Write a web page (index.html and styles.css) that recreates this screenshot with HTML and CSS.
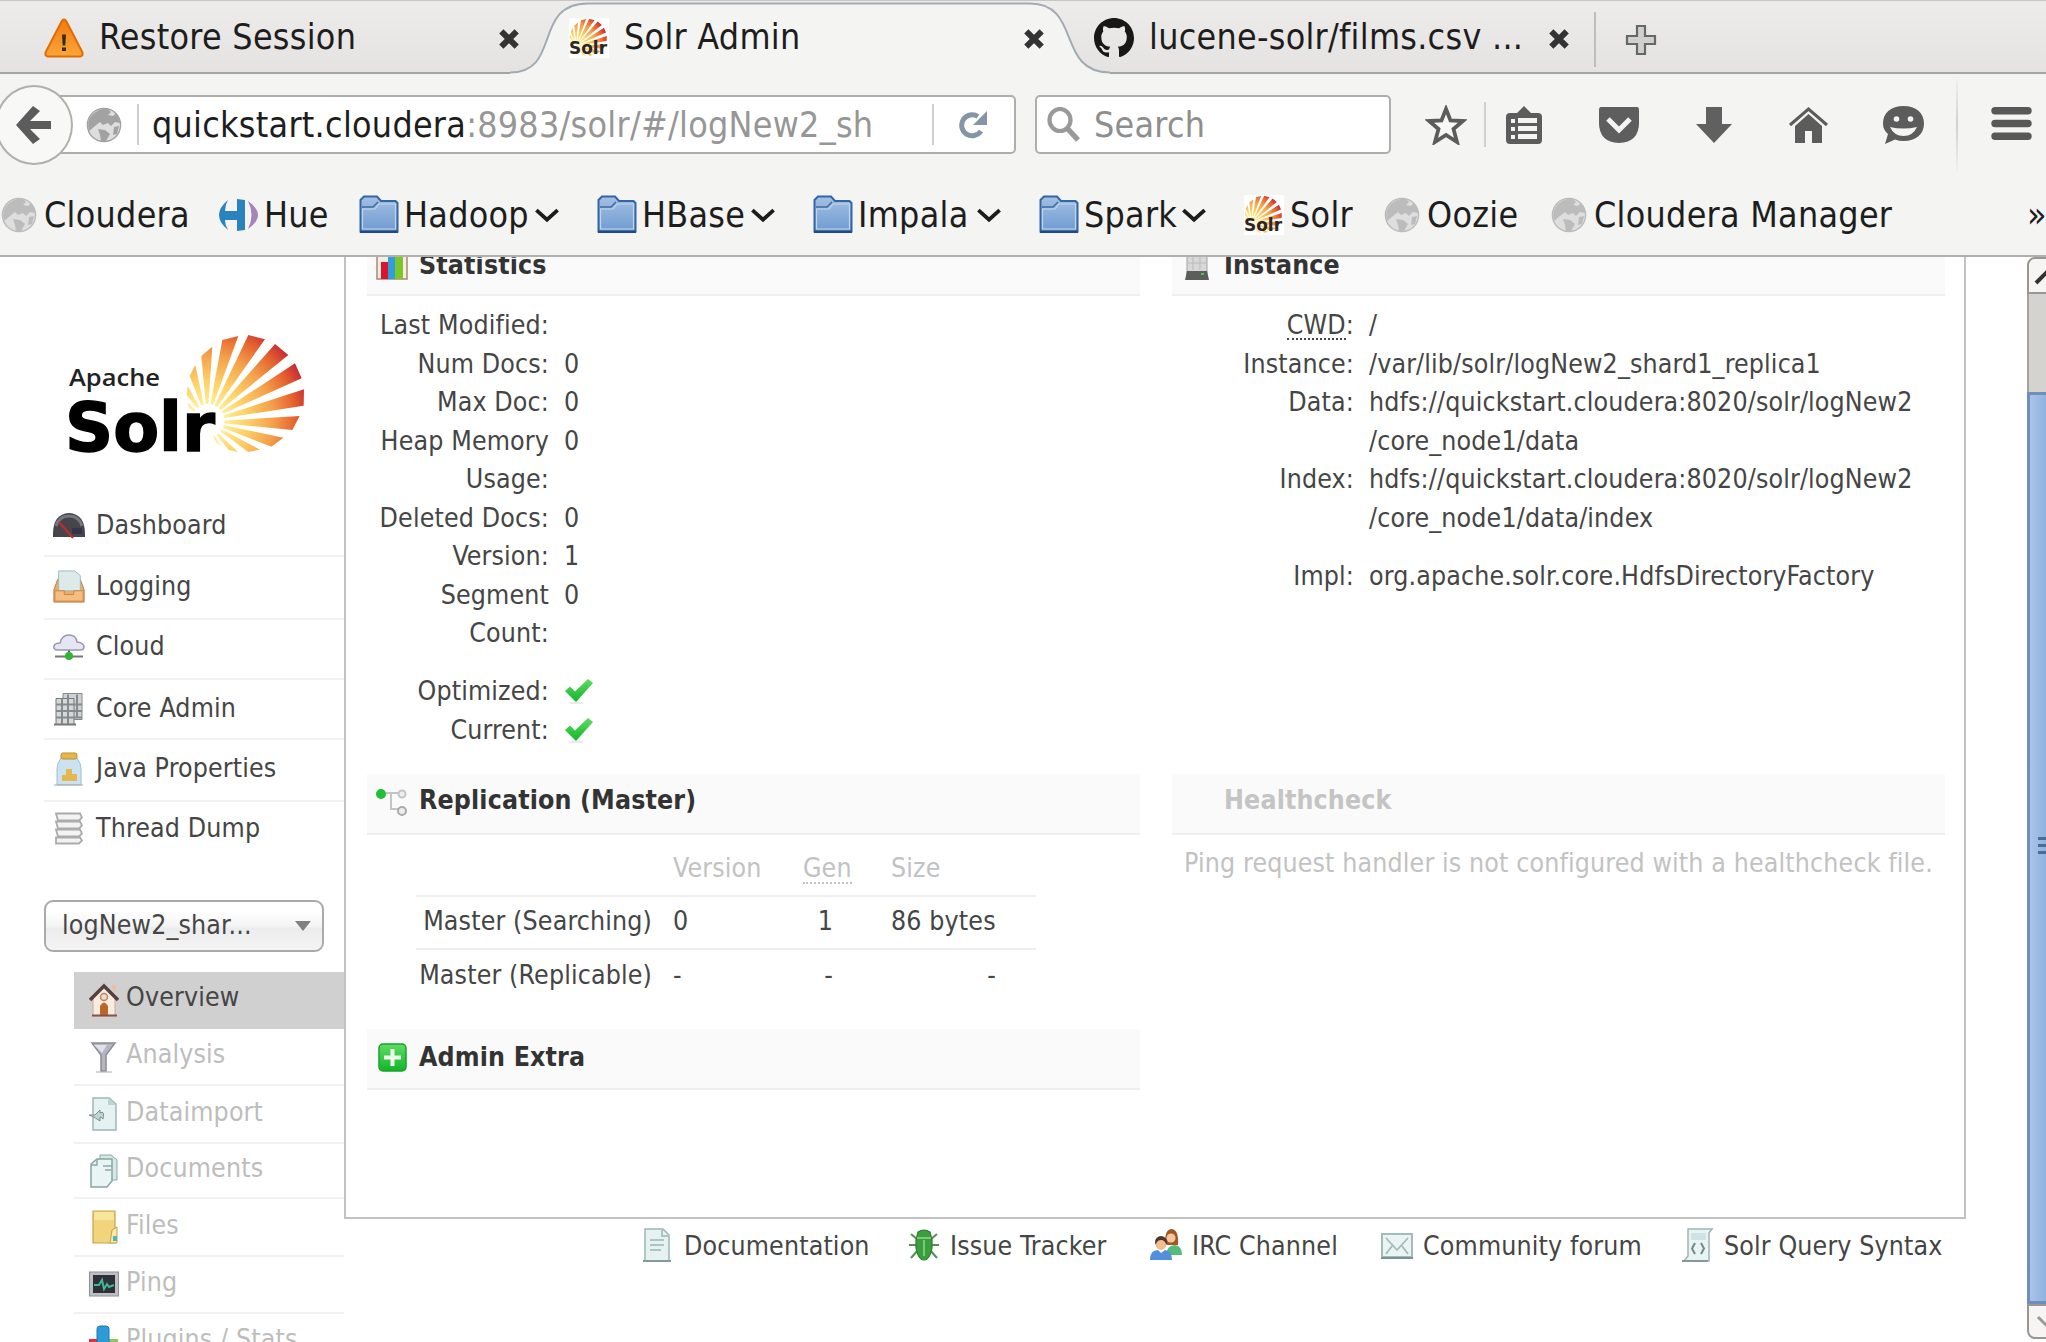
FILE: index.html
```html
<!DOCTYPE html>
<html lang="en">
<head>
<meta charset="utf-8">
<title>Solr Admin</title>
<link rel="stylesheet" href="styles.css">
</head>
<body>
<svg class="defs" width="0" height="0" aria-hidden="true">
  <defs>
    <radialGradient id="sun" gradientUnits="userSpaceOnUse" cx="622" cy="512" r="330">
      <stop offset=".12" stop-color="#fff3a0"/><stop offset=".35" stop-color="#fdd268"/><stop offset=".6" stop-color="#f4a04a"/><stop offset=".8" stop-color="#e5622f"/><stop offset=".95" stop-color="#c62a33"/>
    </radialGradient>
    <linearGradient id="folderFill" x1="0" y1="0" x2="0" y2="1"><stop offset="0" stop-color="#a4c0e4"/><stop offset="1" stop-color="#6f9bd0"/></linearGradient>
    <linearGradient id="warnFill" x1="0" y1="0" x2="0" y2="1"><stop offset="0" stop-color="#f07a10"/><stop offset="1" stop-color="#fba63a"/></linearGradient>
    <linearGradient id="greenFill" x1="0" y1="0" x2="0" y2="1"><stop offset="0" stop-color="#5fdc62"/><stop offset="1" stop-color="#12b52a"/></linearGradient>
    <g id="rays" fill="url(#sun)">
      <path d="M622 512L745 255L795 268ZM622 512L825 282L865 315ZM622 512L885 340L905 385ZM622 512L912 418L911 467ZM622 515L899 498L877 540ZM622 515L850 563L814 590ZM622 515L780 599L745 606ZM622 520L714 606L686 600ZM622 512L715 258L667 270ZM622 512L637 290L604 318ZM622 512L586 345L569 378ZM622 512L563 408L560 436ZM622 512L562 458L568 474ZM622 520L664 592L645 570Z"/>
    </g>
  </defs>
  <symbol id="i-solr" viewBox="0 0 40 40">
    <rect width="40" height="40" fill="#fff"/>
    <g transform="translate(-58 -26) scale(.105 .105)"><use href="#rays"/></g>
    <text x="0" y="36" textLength="38" lengthAdjust="spacingAndGlyphs" font-family="DejaVu Sans" font-weight="bold" font-size="17" fill="#2b2626">Solr</text>
  </symbol>
  <symbol id="i-globe" viewBox="0 0 36 36">
    <circle cx="18" cy="18" r="16.6" fill="#dedede" stroke="currentColor" stroke-width="1.4"/>
    <path fill="currentColor" d="M7 7Q14 1 22 2L25 5L22 8L27 9L30 6Q34 11 34 16L29 15L25 19L22 16L17 18L14 15L9 19L3 24Q0 14 7 7ZM12 22L19 23L24 27L20 34L15 34L14 28ZM28 20L33 19L31 27L27 28Z"/>
  </symbol>
  <symbol id="i-folder" viewBox="0 0 40 38">
    <path d="M1.5 12V5L5 1.5H18L22 6H36.500L38.500 8V36.500H1.500Z" fill="url(#folderFill)" stroke="#3465a4" stroke-width="2"/>
    <path d="M3 12H14L19 7" fill="none" stroke="#44699e" stroke-width="1.500"/>
    <path d="M3.500 14H16L20 9H36.500V34H3.500Z" fill="none" stroke="#c3d5ec" stroke-width="1.200"/>
    <path d="M1 36.800H39" stroke="#204a87" stroke-width="2.200"/>
  </symbol>
  <symbol id="i-close" viewBox="0 0 20 20"><path d="M3 3L17 17M17 3L3 17" stroke="#333" stroke-width="5.400"/></symbol>
  <symbol id="i-chev" viewBox="0 0 24 16"><path d="M2 3L12 12L22 3" fill="none" stroke="#1c1c1c" stroke-width="3.600"/></symbol>
  <symbol id="i-check" viewBox="0 0 30 26"><path d="M1 13L6 8.500L11 13.500L24 1L29 5L12 24Z" fill="url(#greenFill)"/><path d="M6 25H19" stroke="#e4e4e4" stroke-width="1.500"/></symbol>
</svg>

<header class="chrome">
  <div class="tabs">
    <div class="tab tab-first">
      <svg class="fav" viewBox="0 0 40 39"><path d="M17.500 3Q20 -1 22.500 3L38.500 34Q39 38 36 38H4Q1 38 1.500 34Z" fill="url(#warnFill)" stroke="#e06c05" stroke-width="2"/><path d="M18 16H22L21.300 27H18.700ZM18 29H22V32.500H18Z" fill="#3b2a14"/></svg>
      <span class="tab-title">Restore Session</span>
      <svg class="close"><use href="#i-close"/></svg>
    </div>
    <div class="tab tab-active">
      <svg class="tab-shape" viewBox="0 0 600 74"><path d="M0 72.500C52 72.500 22 3.500 78 3.500H520C572 3.500 546 72.500 600 72.500V74H0Z" fill="#f4f4f2"/><path d="M0 72.500C52 72.500 22 3.500 78 3.500H520C572 3.500 546 72.500 600 72.500" fill="none" stroke="#a3abb2" stroke-width="2"/></svg>
      <svg class="fav"><use href="#i-solr"/></svg>
      <span class="tab-title">Solr Admin</span>
      <svg class="close"><use href="#i-close"/></svg>
    </div>
    <div class="tab tab-last">
      <svg class="fav" viewBox="0 0 16 16"><path fill="#191717" d="M8 0C3.580 0 0 3.580 0 8c0 3.540 2.290 6.530 5.470 7.590.4.070.55-.17.55-.38 0-.19-.01-.82-.01-1.490-2.010.37-2.530-.49-2.690-.94-.09-.23-.48-.94-.82-1.130-.28-.15-.68-.52-.01-.53.63-.01 1.080.58 1.230.82.72 1.210 1.870.87 2.330.66.07-.52.28-.87.51-1.070-1.780-.2-3.640-.89-3.640-3.950 0-.87.31-1.590.82-2.150-.08-.2-.36-1.020.08-2.120 0 0 .67-.21 2.200.82.64-.18 1.320-.27 2-.27s1.360.09 2 .27c1.530-1.040 2.200-.82 2.200-.82.44 1.100.16 1.920.08 2.120.51.56.82 1.270.82 2.150 0 3.070-1.870 3.750-3.650 3.950.29.25.54.73.54 1.480 0 1.070-.01 1.930-.01 2.200 0 .21.15.46.55.38A8.010 8.010 0 0 0 16 8c0-4.420-3.580-8-8-8Z"/></svg>
      <span class="tab-title">lucene-solr/films.csv ...</span>
      <svg class="close"><use href="#i-close"/></svg>
    </div>
    <div class="new-tab"><svg width="32" height="32" viewBox="0 0 32 32"><path d="M12 2H20V12H30V20H20V30H12V20H2V12H12Z" fill="#d0d0ce" stroke="#666864" stroke-width="2.200"/></svg></div>
  </div>

  <div class="navbar">
    <div class="back"><svg width="36" height="40" viewBox="0 0 36 40"><path d="M0 20L17 1L24 6L14 16H35V24H14L24 34L17 39Z" fill="#5c5c5c"/></svg></div>
    <div class="url">
      <svg class="globe dark"><use href="#i-globe"/></svg>
      <i class="vline"></i>
      <span class="address">quickstart.cloudera<span class="dim">:8983/solr/#/logNew2_sh</span></span>
      <i class="vline"></i>
      <svg class="reload" viewBox="0 0 29 28"><path d="M22 20A10.500 10.500 0 1 1 19 5.500" fill="none" stroke="#8495a6" stroke-width="5"/><path d="M28 0V14H14Z" fill="#8495a6"/></svg>
    </div>
    <div class="search">
      <svg width="34" height="35" viewBox="0 0 34 35"><ellipse cx="13" cy="13" rx="10.500" ry="11" fill="none" stroke="#999" stroke-width="4.200"/><path d="M20 21L31 33" stroke="#999" stroke-width="5.500"/></svg>
      <span>Search</span>
    </div>
    <div class="tools">
      <svg class="t-star" width="42" height="40" viewBox="0 0 42 40"><path d="M21 4L25.500 15.500L38 16L28.500 24L32 37L21 30L10 37L13.500 24L4 16L16.500 15.500Z" fill="#f8f8f7" stroke="#5c5c5c" stroke-width="3.800"/></svg>
      <i class="vline"></i>
      <svg class="t-clip" width="36" height="38" viewBox="0 0 36 38"><path d="M4 7H11L18 0L25 7H32Q36 7 36 11V34Q36 38 32 38H4Q0 38 0 34V11Q0 7 4 7Z" fill="#5c5c5c"/><path d="M5 13H9V17H5ZM5 21H9V25H5ZM5 29H9V33H5ZM12 12H31V17H12ZM12 20H31V25H12ZM12 28H31V33H12Z" fill="#f4f4f2"/></svg>
      <svg class="t-pocket" width="40" height="36" viewBox="0 0 40 36"><path d="M2 0H38Q40 0 40 3V16Q40 35 20 36Q0 35 0 16V3Q0 0 2 0Z" fill="#5e5e5e"/><path d="M9 12L20 23L31 12" fill="none" stroke="#f4f4f2" stroke-width="5"/></svg>
      <svg class="t-down" width="36" height="36" viewBox="0 0 36 36"><path d="M10 0H26V17H36L18 36L0 17H10Z" fill="#606060"/></svg>
      <svg class="t-home" width="39" height="36" viewBox="0 0 39 36"><path d="M1 18L19.500 2L38 18" fill="none" stroke="#5c5c5c" stroke-width="3"/><path d="M6 19L19.500 7L33 19V36H23V24H16V36H6Z" fill="#5c5c5c"/></svg>
      <svg class="t-chat" width="41" height="38" viewBox="0 0 41 38"><path d="M20.500 0C33 0 41 7 41 17.500S33 35 20.500 35Q16 35 12 33.500L2 38L5 28Q0 24 0 17.500C0 7 8 0 20.500 0Z" fill="#5c5c5c"/><circle cx="13.500" cy="13" r="2.800" fill="#f4f4f2"/><circle cx="27.500" cy="13" r="2.800" fill="#f4f4f2"/><path d="M7 21Q20 24 34 21Q30 30 20.500 30Q11 30 7 21Z" fill="#f4f4f2"/></svg>
      <i class="vline tall"></i>
      <svg class="t-menu" width="41" height="33" viewBox="0 0 41 33"><path d="M4 3.800H37M4 16.500H37M4 29.200H37" stroke="#585858" stroke-width="7.400" stroke-linecap="round"/></svg>
    </div>
  </div>

  <div class="bookmarks">
    <svg class="globe b1"><use href="#i-globe"/></svg><span class="w-cloudera">Cloudera</span>
    <svg class="hue" viewBox="0 0 40 32"><path d="M10 1Q-8 16 10 31Q7 26 7 21H19V32L27 31V1L19 0V12H7Q7 6 10 1Z" fill="#2a82bf"/><path d="M30 2Q50 16 30 30Q37 16 30 2Z" fill="#a584b8"/></svg><span class="w-hue">Hue</span>
    <svg class="folder"><use href="#i-folder"/></svg><span class="w-hadoop">Hadoop</span><svg class="chev"><use href="#i-chev"/></svg>
    <svg class="folder"><use href="#i-folder"/></svg><span class="w-hbase">HBase</span><svg class="chev"><use href="#i-chev"/></svg>
    <svg class="folder"><use href="#i-folder"/></svg><span class="w-impala">Impala</span><svg class="chev"><use href="#i-chev"/></svg>
    <svg class="folder"><use href="#i-folder"/></svg><span class="w-spark">Spark</span><svg class="chev"><use href="#i-chev"/></svg>
    <svg class="fav"><use href="#i-solr"/></svg><span class="w-solr">Solr</span>
    <svg class="globe"><use href="#i-globe"/></svg><span class="w-oozie">Oozie</span>
    <svg class="globe"><use href="#i-globe"/></svg><span class="w-cm">Cloudera Manager</span>
    <span class="more">»</span>
  </div>
</header>

<div class="page">
  <aside class="sidebar">
    <svg class="logo" width="320" height="130" viewBox="0 0 320 130">
      <g transform="translate(0 -78) scale(.33333)"><use href="#rays"/><circle cx="624" cy="512" r="50" fill="#fff"/></g>
      <text x="69" y="58" textLength="91" lengthAdjust="spacingAndGlyphs" font-family="Open Sans" font-weight="600" font-size="23" fill="#222">Apache</text>
      <text x="65" y="123" textLength="150" lengthAdjust="spacingAndGlyphs" font-family="DejaVu Sans" font-weight="bold" font-size="67" fill="#000" stroke="#000" stroke-width="1.500">Solr</text>
    </svg>
    <ul class="menu">
      <li><svg viewBox="0 0 32 28"><path d="M0 22Q0 2 16 1Q32 2 32 22V25H0Z" fill="#45454b"/><path d="M3 14Q6 4 16 4T29 14" fill="none" stroke="#77777f" stroke-width="3"/><path d="M19 16H29V22H19Z" fill="#33334a"/><path d="M6 10L20 26" stroke="#c8282c" stroke-width="2"/></svg>Dashboard</li>
      <li><svg viewBox="0 0 32 36"><path d="M4 10H28L32 21V34H0V21Z" fill="#e9ad6b" stroke="#b87b45"/><path d="M5 1H22L28 6V22H5Z" fill="#dcebea" stroke="#9dbab8"/><path d="M1 22H11V26H21V22H31V33H1Z" fill="#f5bd80" stroke="#c98343"/></svg>Logging</li>
      <li><svg viewBox="0 0 32 26"><path d="M16 16V22" stroke="#555" stroke-width="2"/><path d="M2 22.500H30" stroke="#777" stroke-width="2"/><path d="M5 16Q0 16 1 12Q2 9 7 9Q9 1 16 1Q23 1 24 8Q31 9 31 13Q31 16 27 16Z" fill="#e6e6f3" stroke="#9797b5" stroke-width="1.500"/><circle cx="16" cy="22" r="4" fill="#2fb536"/></svg>Cloud</li>
      <li><svg viewBox="0 0 32 33"><path d="M10 1H29V27H10Z" fill="#cfd2d6" stroke="#888"/><path d="M3 6H21V32H3Z" fill="#d5d9d9" stroke="#777"/><path d="M3 12H29M3 18.500H29M3 25H29M9 6V32M15 2V32M24 2V26" stroke="#858b8b" stroke-width="2"/><path d="M1 32H23" stroke="#777" stroke-width="2"/></svg>Core Admin</li>
      <li><svg viewBox="0 0 32 34"><path d="M8 6H24Q28 11 28 17V33H4V17Q4 11 8 6Z" fill="#cbe2f3" stroke="#a0bfd6"/><rect x="8" y="1" width="16" height="6" rx="2" fill="#e6b64c" stroke="#bd8d2c"/><path d="M13 17H19V22H24V29H9V23H13Z" fill="#e5b84f"/><path d="M1 33H30" stroke="#aaa"/></svg>Java Properties</li>
      <li><svg viewBox="0 0 32 33"><path d="M3 1H27L29 5L26 8H5ZM3 9H27L29 13L26 16H5ZM3 17H27L29 21L26 24H5ZM3 25H27L29 28L26 31H3Z" fill="#f3f3f3" stroke="#ababab" stroke-width="1.800"/></svg>Thread Dump</li>
    </ul>
    <div class="select"><span>logNew2_shar...</span><i></i></div>
    <ul class="submenu">
      <li class="active"><svg viewBox="0 0 30 34"><path d="M4 15L15 4L26 15V33H4Z" fill="#f8ece0" stroke="#ccaa90"/><path d="M1 17L15 3L29 17" fill="none" stroke="#55403f" stroke-width="3.500"/><path d="M11 32V23Q15 16 19 23V32Z" fill="#b96728"/><circle cx="15" cy="14" r="3.500" fill="#ddd" stroke="#cf8353" stroke-width="1.500"/><path d="M3 32.500H28" stroke="#8c514a" stroke-width="2"/><path d="M23 2H27V9L23 6Z" fill="#e8c0a2"/></svg>Overview</li>
      <li><svg viewBox="0 0 30 32"><path d="M3 2H26L17 14V30H12V14Z" fill="#b6b6c2" stroke="#8c8c98" stroke-width="1.500"/><path d="M5 4H18L13 12Z" fill="#e0e0ea"/><path d="M7 31H23" stroke="#aaa"/></svg>Analysis</li>
      <li><svg viewBox="0 0 30 34"><path d="M4 1H20L27 7V33H4Z" fill="#e4f2f1" stroke="#9cb8b6" stroke-width="1.500"/><path d="M19 1V8H27" fill="#bcd6d4"/><path d="M0 18H6L11 13V16Q16 13 14 22Q12 20 11 20V24L5 20Z" fill="#c2d5d4" stroke="#79908f"/></svg>Dataimport</li>
      <li><svg viewBox="0 0 30 34"><path d="M11 1H22L28 6V26H11Z" fill="#d4e8e7" stroke="#8ba9a8"/><path d="M2 10L8 5H23V27L18 33H2Z" fill="#e9f5f4" stroke="#88a4a3" stroke-width="1.500"/><path d="M8 5V11H2M14 12H23M16 16H22" fill="none" stroke="#8ba9a8" stroke-width="1.500"/></svg>Documents</li>
      <li><svg viewBox="0 0 30 34"><path d="M4 1H26V33H4Z" fill="#f2d47d" stroke="#c7a14a" stroke-width="1.200"/><path d="M5 2H25V10H5Z" fill="#f9e49b"/><path d="M21 33L23 20L28 17V33Z" fill="#fae9ae" stroke="#c7a14a"/><path d="M24 26H28V31H24Z" fill="#4bb6bb"/></svg>Files</li>
      <li><svg viewBox="0 0 30 34"><rect x=".5" y="4" width="29" height="24" fill="#bfc0c4" stroke="#8f9094"/><rect x="4" y="7" width="22" height="18" fill="#2e303a"/><path d="M5 17H10L13 12L15 21L18 16L20 19L25 17" fill="none" stroke="#40b890" stroke-width="2"/></svg>Ping</li>
      <li><svg viewBox="0 0 30 34"><path d="M0 14H12V30H0Z" fill="#dc3434"/><path d="M17 14H29V30H17Z" fill="#8bc85c"/><rect x="8" y="1" width="12" height="20" rx="3" fill="#2d9bd8" stroke="#2078ad"/></svg>Plugins / Stats</li>
    </ul>
  </aside>

  <main class="main">
    <div class="panel">
      <div class="col">
        <section class="top-block">
          <h2><svg viewBox="0 0 32 40"><path d="M1 5H31V38H1Z" fill="#f6ece2" stroke="#a48a77" stroke-width="1.500"/><path d="M5 21H12V38H5Z" fill="#d9142b"/><path d="M12 10H19V38H12Z" fill="#2e9fdc"/><path d="M19 16H27V38H19Z" fill="#79c828"/></svg>Statistics</h2>
          <dl>
            <dt>Last Modified:</dt><dd></dd>
            <dt>Num Docs:</dt><dd>0</dd>
            <dt>Max Doc:</dt><dd>0</dd>
            <dt>Heap Memory<br>Usage:</dt><dd>0</dd>
            <dt>Deleted Docs:</dt><dd>0</dd>
            <dt>Version:</dt><dd>1</dd>
            <dt>Segment<br>Count:</dt><dd>0</dd>
            <dt class="gap">Optimized:</dt><dd class="gap"><svg class="check"><use href="#i-check"/></svg></dd>
            <dt>Current:</dt><dd><svg class="check"><use href="#i-check"/></svg></dd>
          </dl>
        </section>
        <section class="replication">
          <h2><svg viewBox="0 0 32 34"><path d="M10 9H22M15 9V25H22" fill="none" stroke="#c4c4c4" stroke-width="2"/><circle cx="5" cy="10" r="5" fill="#21bd36"/><circle cx="26" cy="10" r="3.500" fill="#eee" stroke="#c4c4c4" stroke-width="2"/><circle cx="26" cy="27" r="4" fill="#eee" stroke="#aaa" stroke-width="2"/></svg>Replication (Master)</h2>
          <table>
            <tr class="head"><th></th><td>Version</td><td class="gen"><abbr>Gen</abbr></td><td class="size">Size</td></tr>
            <tr><th>Master (Searching)</th><td>0</td><td class="gen num">1</td><td class="size">86 bytes</td></tr>
            <tr><th>Master (Replicable)</th><td>-</td><td class="gen num">-</td><td class="size right">-</td></tr>
          </table>
        </section>
        <section class="extra">
          <h2><svg viewBox="0 0 32 34"><rect x="3" y="4" width="27" height="27" rx="4" fill="url(#greenFill)" stroke="#1aa32c" stroke-width="1.500"/><path d="M16.500 9V26M8 17.500H25" stroke="#effaef" stroke-width="4"/></svg>Admin Extra</h2>
        </section>
      </div>
      <div class="col">
        <section class="top-block">
          <h2><svg viewBox="0 0 32 40"><path d="M6 2H26V36H6Z" fill="#d8d8d8" stroke="#a2a2a2"/><path d="M12 3V29M19 3V29M6 15H26M6 22H26" stroke="#bbb"/><path d="M6 30H26L28 39H4Z" fill="#5b5e5b"/><path d="M20 33H23" stroke="#4c4" stroke-width="2"/></svg>Instance</h2>
          <dl>
            <dt><abbr>CWD</abbr>:</dt><dd>/</dd>
            <dt>Instance:</dt><dd>/var/lib/solr/logNew2_shard1_replica1</dd>
            <dt>Data:</dt><dd>hdfs://quickstart.cloudera:8020/solr/logNew2<br>/core_node1/data</dd>
            <dt>Index:</dt><dd>hdfs://quickstart.cloudera:8020/solr/logNew2<br>/core_node1/data/index</dd>
            <dt class="gap">Impl:</dt><dd class="gap">org.apache.solr.core.HdfsDirectoryFactory</dd>
          </dl>
        </section>
        <section class="health">
          <h2>Healthcheck</h2>
          <p>Ping request handler is not configured with a healthcheck file.</p>
        </section>
      </div>
    </div>
    <footer class="links">
      <span class="l-doc"><svg viewBox="0 0 32 34"><path d="M3 1H21L27 7V33H3Z" fill="#e6f1f1" stroke="#9db5b5" stroke-width="1.500"/><path d="M20 1V8H27M8 12H22M8 17H22M8 22H19" fill="none" stroke="#aac5c6" stroke-width="2"/><path d="M1 33H29" stroke="#829a9a" stroke-width="2"/></svg>Documentation</span>
      <span class="l-bug"><svg viewBox="0 0 32 34"><path d="M3 6L10 12M29 6L22 12M1 17H31M3 30L10 22M29 30L22 22" stroke="#568f56" stroke-width="2"/><path d="M10 4Q16 0 22 4L24 12V20Q22 32 16 32Q10 32 8 20V12Z" fill="#3c9f3e" stroke="#2a7b2e" stroke-width="1.200"/><path d="M9 10H23M16 12V28" stroke="#78cb76" stroke-width="2"/></svg>Issue Tracker</span>
      <span class="l-irc"><svg viewBox="0 0 32 34"><path d="M15 14Q15 1 22 1Q29 2 28 17H17Z" fill="#a35727"/><circle cx="21" cy="10" r="4.500" fill="#f7c79c"/><path d="M16 27Q17 17 25 17Q32 18 32 27Z" fill="#55bb7b"/><circle cx="11" cy="14" r="6" fill="#4b3731"/><circle cx="11" cy="17" r="5" fill="#f3bd8c"/><path d="M0 32Q0 22 8 22L11 25L15 22Q22 23 22 32Z" fill="#548fdc"/></svg>IRC Channel</span>
      <span class="l-mail"><svg viewBox="0 0 32 34"><path d="M1 6H31V29H1Z" fill="#eaf4f3" stroke="#a3bbb9" stroke-width="2"/><path d="M5 10L16 22L27 10M5 26L11 18M27 26L21 18" fill="none" stroke="#a3bbb9" stroke-width="1.800"/><path d="M0 30H32" stroke="#789492" stroke-width="2"/></svg>Community forum</span>
      <span class="l-syn"><svg viewBox="0 0 32 34"><path d="M6 1H30L27 5V33H2L6 28Z" fill="#e8f3f3" stroke="#9db5b5" stroke-width="1.500"/><path d="M9 5H24V12H9Z" fill="#cfe3e4"/><path d="M13 15L10 20.500L13 26M19 15L22 20.500L19 26" fill="none" stroke="#788" stroke-width="2"/><path d="M0 33H26" stroke="#829a9a" stroke-width="2"/></svg>Solr Query Syntax</span>
    </footer>
  </main>

  <div class="scrollbar">
    <div class="sb-up"><svg width="20" height="34" viewBox="0 0 20 34"><path d="M7 24L20 11L33 24" fill="none" stroke="#333" stroke-width="4"/></svg></div>
    <div class="sb-trough"></div>
    <div class="sb-thumb"><i></i><i></i><i></i></div>
    <div class="sb-down"><svg width="20" height="34" viewBox="0 0 20 34"><path d="M9 11L20 22L31 11" fill="none" stroke="#999" stroke-width="3"/></svg></div>
  </div>
</div>
</body>
</html>
```
FILE: styles.css
```css
* { box-sizing: border-box; }
html, body { margin: 0; height: 1342px; overflow: hidden; }
body {
  width: 2046px;
  background: #fff;
  color: #454545;
  font-family: "DejaVu Sans Condensed", "DejaVu Sans", sans-serif;
  font-stretch: condensed;
  font-size: 26.5px;
  letter-spacing: .14px;
  white-space: nowrap;
}
svg { display: block; flex: none; font-stretch: normal; letter-spacing: 0; }
.defs { position: absolute; }
ul, dl, dd, p, h2 { margin: 0; padding: 0; list-style: none; }

/* Browser chrome */
.chrome {
  height: 257px;
  background: #f4f4f2;
  border-bottom: 2px solid #b3afac;
  color: #1d1d1d;
  font-size: 35.5px;
  letter-spacing: .28px;
}
.tabs {
  display: flex;
  height: 74px;
  border-top: 1px solid #c6c6c4;
  border-bottom: 2px solid #a5a5a3;
  background: linear-gradient(#edecea, #e4e3e1);
}
.tab { display: flex; height: 73px; align-items: center; }
.tab-title { flex: none; line-height: 72px; height: 73px; margin-left: 15px; }
.fav { width: 40px; height: 40px; }
.close { width: 22px; height: 22px; margin-left: auto; margin-top: 3px; }
.tab-first { width: 520px; padding-left: 44px; }
.tab-active { position: relative; width: 525px; padding-left: 49px; }
.tab-active > * { position: relative; }
.tab-active .tab-shape { position: absolute; left: -10px; top: -1px; width: 600px; height: 74px; }
.tab-last { width: 525px; padding-left: 49px; }
.new-tab { display: flex; align-items: center; height: 55px; margin: 11px 0 0 24px; padding-left: 29px; border-left: 2px solid #bdbdbb; }

.navbar { display: flex; align-items: center; height: 101px; }
.back {
  display: flex; flex: none; align-items: center; justify-content: center;
  width: 78px; height: 80px; margin-left: -5px;
  border: 2px solid #b3b0ab; border-radius: 50%;
  background: #f8f8f7; z-index: 1;
}
.url, .search {
  display: flex; flex: none; align-items: center;
  height: 59px; background: #fff;
  border: 2px solid #b0adaa; border-radius: 5px;
}
.url { width: 963px; margin-left: -20px; padding-left: 31px; }
.globe { width: 36px; height: 36px; color: #bcbcbc; }
.globe.dark { color: #a2a2a2; }
.vline { flex: none; width: 2px; height: 41px; background: #cfcfcd; }
.url .vline { margin-left: 15px; }
.address { width: 780px; margin-left: 13px; }
.url .address + .vline { margin-left: 0; }
.dim { color: #969696; }
.reload { width: 29px; height: 28px; margin-left: 25px; }
.search { width: 356px; margin-left: 19px; padding-left: 10px; color: #8e8e8e; }
.search span { margin-left: 13px; }
.tools { display: flex; align-items: center; height: 101px; }
.t-star { margin-left: 34px; }
.tools .vline { margin-left: 17px; height: 45px; }
.t-clip { margin-left: 20px; }
.t-pocket { margin-left: 57px; }
.t-down { margin-left: 57px; }
.t-home { margin-left: 57px; }
.t-chat { margin-left: 55px; }
.tools .vline.tall { margin-left: 32px; height: 92px; background: linear-gradient(#f0f0ee, #d0d0ce, #f0f0ee); }
.t-menu { margin-left: 33px; margin-top: -3px; }

.bookmarks { display: flex; align-items: center; height: 80px; padding-left: 1px; line-height: 80px; }
.bookmarks span { flex: none; margin-left: 6px; }
.bookmarks .globe + span { margin-left: 7px; }
.hue { width: 40px; height: 34px; }
.folder { width: 40px; height: 38px; margin-top: -3px; }
.folder + span { text-indent: -1px; }
.chev { width: 26px; height: 17px; }
.w-cloudera { width: 174px; }
.w-hue { width: 95px; }
.w-hadoop { width: 129px; }
.w-hbase { width: 107px; }
.w-impala { width: 117px; }
.w-spark { width: 96px; }
.chev + .folder { margin-left: 37px; }
.chev + .fav { margin-left: 37px; }
.w-solr { width: 94px; }
.w-oozie { width: 124px; }
.w-cm { width: 427px; }

/* Page */
.page { display: flex; height: 1085px; overflow: hidden; }
.sidebar { flex: none; width: 344px; }
.logo { margin-top: 71px; }
.menu { margin: 38px 0 0 44px; }
.menu li { display: flex; align-items: center; height: 61px; line-height: 58px; border-bottom: 2px solid #f1f1f1; padding: 0 0 1px 9px; }
.menu li:nth-child(2) { height: 63px; padding-bottom: 4px; }
.menu li:nth-child(3) { height: 60px; padding-bottom: 6px; }
.menu li:nth-child(4) { height: 60px; padding-bottom: 2px; }
.menu li:nth-child(5) { height: 62px; padding-bottom: 4px; }
.menu li:last-child { border: 0; padding-bottom: 10px; }
.menu svg { width: 32px; height: 34px; margin: 2px 11px 0 0; }
.select {
  display: flex; align-items: center; justify-content: space-between;
  width: 280px; height: 52px; margin: 37px 0 0 44px; padding: 0 11px 3px 16px;
  border: 2px solid #aaa; border-radius: 9px;
  background: linear-gradient(#fff 20%, #f4f4f4 50%, #ececec 55%, #f4f4f4);
}
.select i { border: 8px solid transparent; border-top: 10px solid #808080; border-bottom: 0; margin-top: 3px; }
.submenu { margin: 20px 0 0 74px; color: #bdbdbd; }
.submenu li { display: flex; align-items: center; height: 57px; padding: 0 0 6px 15px; border-bottom: 2px solid #f1f1f1; }
.submenu li:nth-child(3) { height: 58px; }
.submenu li:nth-child(4) { height: 55px; }
.submenu li:nth-child(5) { height: 58px; }
.submenu li:last-child { border: 0; padding-bottom: 8px; }
.submenu .active { background: #d0d0d0; border-color: #d0d0d0; color: #454545; }
.submenu svg { width: 30px; height: 34px; margin: 6px 7px 0 0; }

.main { flex: none; width: 1683px; }
.panel {
  display: flex; gap: 32px; width: 1622px; height: 962px;
  padding: 0 21px; overflow: hidden;
  border: 2px solid #c2c2c2; border-top: 0;
}
.col { width: 773px; flex: none; }
.top-block { height: 517px; overflow: hidden; }
h2 {
  display: flex; height: 61px; padding-left: 9px;
  background: #fafafa; border-bottom: 2px solid #efefef;
  color: #333; font-size: 26.5px; line-height: 52px;
}
h2 svg { width: 32px; height: 34px; margin: 10px 11px 0 0; }
.top-block h2 { margin-top: -18px; height: 57px; }
.top-block h2 svg { height: 40px; margin-top: 2px; }
.extra h2 { line-height: 56px; }
.extra h2 svg { margin-top: 11px; }
dl { display: grid; grid-template-columns: 182px 1fr; line-height: 38.500px; padding-top: 10px; column-gap: 15px; }
dt { text-align: right; }
.gap { padding-top: 19.500px; }
.check { width: 30px; height: 26px; margin-top: 6px; }
abbr { text-decoration: none; border-bottom: 2px dotted currentColor; }
dt abbr { display: inline-block; line-height: 27px; }

.replication { height: 255px; }
table { width: 620px; margin: 9px 0 0 49px; border-collapse: collapse; table-layout: fixed; }
table td, table th { padding: 0; font-weight: normal; }
th { width: 236px; text-align: right; }
td { width: 151px; padding-left: 21px !important; }
tr { height: 53px; line-height: 46px; }
table th, table td { padding-bottom: 3px; }
tr + tr { border-top: 2px solid #efefef; }
.head { color: #c2c2c2; height: 52px; line-height: 44px; }
.gen { width: 88px; padding-left: 0 !important; }
.head abbr { display: inline-block; line-height: 28px; }
table .num { padding-right: 58px; text-align: right; }
.size { width: 145px; padding-left: 0 !important; }
table .right { text-align: right; padding-right: 40px; }

.health h2 { padding-left: 52px; color: #c4c4c4; }
.health p { color: #c2c2c2; line-height: 55px; text-align: center; }

.links { display: flex; height: 70px; line-height: 53px; }
.links span { display: flex; flex: none; }
.links svg { width: 32px; height: 34px; margin: 9px 10px 0 0; }
.l-doc { margin-left: 298px; width: 266px; }
.l-bug { width: 242px; }
.l-irc { width: 231px; }
.l-mail { width: 301px; }

.scrollbar { display: flex; flex-direction: column; flex: none; width: 19px; height: 1083px; overflow: hidden; }
.sb-up, .sb-down { flex: none; height: 37px; width: 30px; border: 2px solid #999793; background: #f6f5f4; }
.sb-up { border-radius: 8px 0 0 0; }
.sb-down { border-radius: 0 0 0 8px; height: 35px; }
.sb-trough { flex: none; height: 98px; background: #d5d3cf; border-left: 2px solid #a5a3a0; }
.sb-thumb {
  display: flex; flex-direction: column; gap: 4px; align-items: flex-end; justify-content: center;
  height: 912px; padding-bottom: 6px; border: 3px solid #6d8fb9; border-right: 0;
  background: linear-gradient(90deg, #a9c4ea, #8fb2de);
}
.sb-thumb i { width: 8px; height: 3px; background: #4c6c98; }
```
